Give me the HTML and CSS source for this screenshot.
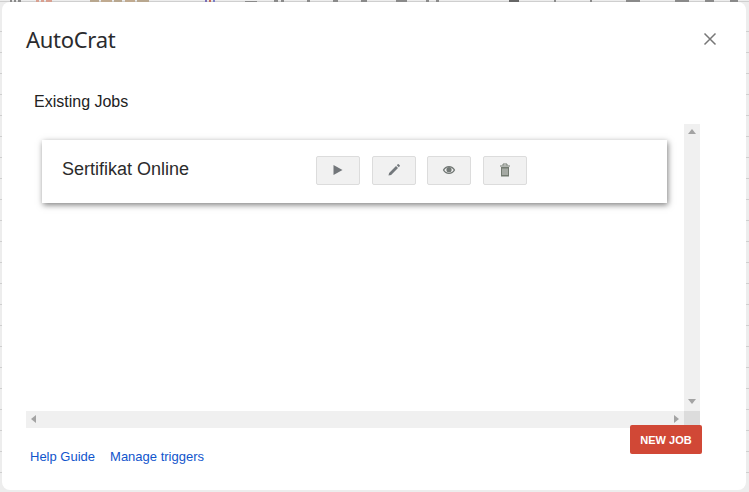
FILE: index.html
```html
<!DOCTYPE html>
<html lang="en">
<head>
<meta charset="utf-8">
<title>AutoCrat</title>
<link rel="stylesheet" href="styles.css">
</head>
<body>
<svg class="toolbar-strip" width="749" height="3" viewBox="0 0 749 3" aria-hidden="true">
  <g fill="#8a8a8a">
    <rect x="10" y="0" width="2" height="2"/><rect x="14" y="0" width="2" height="2"/><rect x="18" y="0" width="3" height="2"/>
    <rect x="36" y="0" width="3" height="2" fill="#d9a090"/><rect x="41" y="0" width="3" height="2" fill="#d9a090"/><rect x="46" y="0" width="6" height="2" fill="#d9a090"/>
    <rect x="90" y="0" width="9" height="2" fill="#b8a78f"/><rect x="101" y="0" width="11" height="2" fill="#c0aa90"/><rect x="114" y="0" width="8" height="2" fill="#b8a78f"/><rect x="125" y="0" width="10" height="2" fill="#c0aa90"/><rect x="137" y="0" width="12" height="2" fill="#b8a78f"/>
    <rect x="205" y="0" width="2" height="2" fill="#7a6fb8"/><rect x="209" y="0" width="2" height="2" fill="#c46a5a"/><rect x="213" y="0" width="2" height="2" fill="#7a7fc8"/>
    <rect x="245" y="1" width="12" height="1"/><rect x="274" y="0" width="4" height="2"/><rect x="281" y="0" width="3" height="2"/>
    <rect x="307" y="0" width="3" height="2"/><rect x="333" y="0" width="5" height="2"/><rect x="361" y="0" width="6" height="2"/>
    <rect x="396" y="0" width="11" height="2"/><rect x="426" y="0" width="3" height="2"/><rect x="436" y="0" width="3" height="2"/>
    <rect x="509" y="0" width="10" height="2" fill="#666"/><rect x="554" y="0" width="2" height="2"/><rect x="590" y="0" width="2" height="2"/>
    <rect x="626" y="0" width="14" height="2"/><rect x="675" y="0" width="14" height="2"/><rect x="705" y="0" width="9" height="2"/><rect x="730" y="0" width="8" height="2"/>
  </g>
</svg>
<main class="dialog">
  <header class="dialog-head">
    <h1 class="dialog-title">AutoCrat</h1>
    <svg class="close-icon" width="14" height="14" viewBox="0 0 14 14" aria-label="Close"><path d="M1.5 1.5l11 11M12.5 1.5l-11 11" stroke="#777" stroke-width="1.5" fill="none"/></svg>
  </header>
  <h2 class="section-title">Existing Jobs</h2>
  <section class="scroll-frame">
    <div class="scroll-content">
      <article class="job-card">
        <span class="job-name">Sertifikat Online</span>
        <div class="job-actions">
          <button class="icon-btn" aria-label="Run"><svg width="14" height="14" viewBox="0 0 14 14"><path d="M2.500 2l9 5-9 5z" fill="#72767a"/></svg></button>
          <button class="icon-btn" aria-label="Edit"><svg width="14" height="14" viewBox="0 0 14 14"><path d="M1.500 12.500l.6-2.600 6.900-6.900 2 2-6.900 6.900zM9.800 2.200l.9-.9a.7.7 0 0 1 1 0l1 1a.7.7 0 0 1 0 1l-.9.900z" fill="#73787c"/></svg></button>
          <button class="icon-btn" aria-label="Preview"><svg width="14" height="14" viewBox="0 0 14 14"><path fill-rule="evenodd" d="M.8 7C2.200 4.300 4.300 3 7 3s4.800 1.300 6.200 4c-1.400 2.700-3.500 4-6.200 4S2.200 9.700.8 7zm1.500 0c1.100 1.700 2.700 2.800 4.700 2.800S10.600 8.700 11.700 7C10.600 5.300 9 4.200 7 4.200S3.400 5.300 2.300 7z" fill="#727875"/><circle cx="7" cy="6.700" r="2.600" fill="#727875"/></svg></button>
          <button class="icon-btn" aria-label="Delete"><svg width="14" height="14" viewBox="0 0 14 14"><path d="M5 2.500v-1.500h4v1.500M2 3h10" stroke="#727a70" stroke-width="1" fill="none"/><path fill-rule="evenodd" d="M3 4h8v9.500H3zM4.600 5.500v6.500h.8V5.500zM6.600 5.500v6.500h.8V5.500zM8.600 5.500v6.500h.8V5.500z" fill="#727a70"/></svg></button>
        </div>
      </article>
    </div>
    <div class="scrollbar-v"><i class="arrow arrow-up"></i><i class="arrow arrow-down"></i></div>
    <div class="scrollbar-h"><i class="arrow arrow-left"></i><i class="arrow arrow-right"></i></div>
    <div class="scroll-corner"></div>
    <button class="new-job">NEW JOB</button>
  </section>
  <footer class="dialog-foot">
    <a class="foot-link" href="#">Help Guide</a>
    <a class="foot-link" href="#">Manage triggers</a>
  </footer>
</main>
</body>
</html>
```

FILE: styles.css
```css
html, body {
  margin: 0;
  height: 100%;
  overflow: hidden;
}

body {
  box-sizing: border-box;
  width: 749px;
  height: 492px;
  padding: 2px 3px 2px 2px;
  position: relative;
  background-color: #ededed;
  background-image: repeating-linear-gradient(to bottom, transparent 0, transparent 20px, #cfcfcf 20px, #cfcfcf 21px);
  background-position: 0 11px;
  font-family: "Liberation Sans", Arial, sans-serif;
}

.toolbar-strip {
  position: absolute;
  top: 0;
  left: 0;
  display: block;
}

.dialog {
  position: relative;
  box-sizing: border-box;
  height: 488px;
  padding: 0 0 0 24px;
  background: #fff;
  border-radius: 8px;
  display: flex;
  flex-direction: column;
}

.dialog-head {
  display: flex;
  justify-content: space-between;
  align-items: center;
  height: 76px;
  padding-right: 29px;
  box-sizing: border-box;
  padding-bottom: 2px;
}

.dialog-title {
  margin: 0;
  font-family: "Noto Sans", Roboto, sans-serif;
  font-size: 22px;
  font-weight: 400;
  color: #2a2b2e;
  line-height: 28px;
  letter-spacing: -0.3px;
}

.close-icon {
  display: block;
}

.section-title {
  margin: 14px 0 0 8px;
  font-size: 16px;
  line-height: 20px;
  font-weight: 400;
  color: #222;
}

.scroll-frame {
  position: relative;
  margin-top: 12px;
  width: 674px;
  height: 304px;
  display: grid;
  grid-template-columns: 1fr 16px;
  grid-template-rows: 1fr 17px;
}

.scroll-content {
  padding: 16px 17px 0 16px;
}

.job-card {
  height: 63px;
  box-sizing: border-box;
  padding: 16px 0 0 20px;
  background: #fff;
  box-shadow: 1px 2px 6px rgba(0, 0, 0, 0.5);
  display: flex;
  align-items: flex-start;
}

.job-name {
  width: 254px;
  font-size: 18px;
  line-height: 26px;
  color: #2b2b2b;
}

.job-actions {
  display: flex;
  gap: 12px;
}

.icon-btn {
  width: 44px;
  height: 29px;
  padding: 0 0 2px;
  display: flex;
  align-items: center;
  justify-content: center;
  background: #f1f1f1;
  border: 1px solid #dcdcdc;
  border-radius: 2px;
}

.icon-btn:nth-child(3) {
  margin-left: -1px;
}

.scrollbar-v,
.scrollbar-h {
  position: relative;
  background: #f0f0f0;
}

.scroll-corner {
  background: #dcdcdc;
}

.arrow {
  position: absolute;
  width: 0;
  height: 0;
  border-style: solid;
  border-color: transparent;
}

.arrow-up {
  top: 5px;
  left: 4px;
  border-width: 0 4px 5px;
  border-bottom-color: #a3a3a3;
}

.arrow-down {
  bottom: 7px;
  left: 4px;
  border-width: 5px 4px 0;
  border-top-color: #a3a3a3;
}

.arrow-left {
  top: 4px;
  left: 5px;
  border-width: 4px 5px 4px 0;
  border-right-color: #a3a3a3;
}

.arrow-right {
  top: 4px;
  right: 5px;
  border-width: 4px 0 4px 5px;
  border-left-color: #a3a3a3;
}

.new-job {
  position: absolute;
  left: 604px;
  top: 301px;
  width: 72px;
  height: 29px;
  padding: 0;
  border: 0;
  border-radius: 2px;
  background: #d14836;
  color: #fff;
  font-family: "Liberation Sans", Arial, sans-serif;
  font-size: 11px;
  font-weight: 700;
}

.dialog-foot {
  display: flex;
  gap: 15px;
  margin: 21px 0 0 4px;
}

.foot-link {
  font-size: 13px;
  line-height: 16px;
  color: #1155cc;
  text-decoration: none;
}
```
